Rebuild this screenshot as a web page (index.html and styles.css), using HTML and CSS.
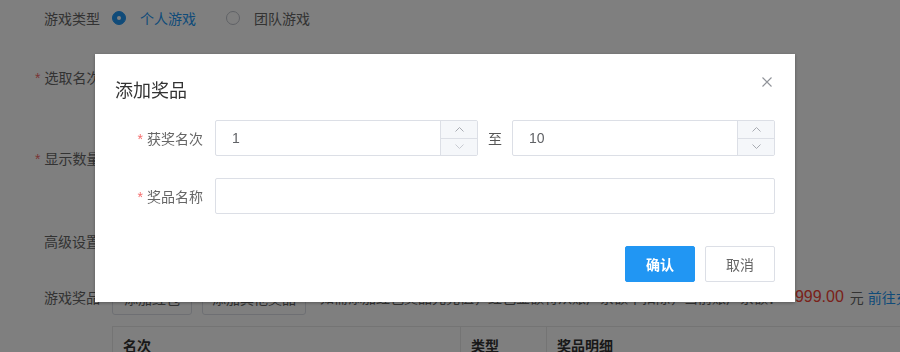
FILE: index.html
```html
<!DOCTYPE html>
<html lang="zh">
<head>
<meta charset="utf-8">
<title>添加奖品</title>
<link rel="stylesheet" href="styles.css">
</head>
<body>
<div class="form">
  <div class="row row-type">
    <div class="label">游戏类型</div>
    <div class="radio checked"><span class="dot"></span><span class="radio-text">个人游戏</span></div>
    <div class="radio"><span class="dot"></span><span class="radio-text">团队游戏</span></div>
  </div>
  <div class="row row-rank">
    <div class="label"><span class="req">*</span>选取名次</div>
    <div class="field-box"></div>
  </div>
  <div class="row row-count">
    <div class="label"><span class="req">*</span>显示数量</div>
    <div class="field-box"></div>
  </div>
  <div class="row row-adv">
    <div class="label">高级设置</div>
  </div>
  <div class="row row-prize">
    <div class="label">游戏奖品</div>
    <button class="btn-plain w80">添加红包</button>
    <button class="btn-plain w104">添加其他奖品</button>
    <span class="hint">如需添加红包奖品先充值，红包金额将从账户余额中扣除，当前账户余额：</span>
    <span class="amount">9999.00</span>
    <span class="unit">元</span>
    <a class="link">前往充值</a>
  </div>
  <div class="table">
    <div class="th c1">名次</div>
    <div class="th c2">类型</div>
    <div class="th c3">奖品明细</div>
  </div>
</div>

<div class="mask"></div>

<div class="dialog">
  <div class="dialog-header">
    <div class="dialog-title">添加奖品</div>
    <span class="close">
      <svg width="10" height="10" viewBox="0 0 10 10"><path d="M0.5 0.5 L9.5 9.5 M9.5 0.5 L0.5 9.5" stroke="#909399" stroke-width="1.1" fill="none"/></svg>
    </span>
  </div>
  <div class="dialog-body">
    <div class="d-row">
      <div class="d-label"><span class="req">*</span>获奖名次</div>
      <div class="num-input">
        <div class="num-value">1</div>
        <div class="spin">
          <div class="spin-btn"><svg width="9" height="5" viewBox="0 0 9 5"><path d="M0.5 4.5 L4.5 0.5 L8.5 4.5" stroke="#a8abb2" fill="none"/></svg></div>
          <div class="spin-btn down"><svg width="9" height="5" viewBox="0 0 9 5"><path d="M0.5 0.5 L4.5 4.5 L8.5 0.5" stroke="#c8cbd2" fill="none"/></svg></div>
        </div>
      </div>
      <span class="to">至</span>
      <div class="num-input">
        <div class="num-value">10</div>
        <div class="spin">
          <div class="spin-btn"><svg width="9" height="5" viewBox="0 0 9 5"><path d="M0.5 4.5 L4.5 0.5 L8.5 4.5" stroke="#a8abb2" fill="none"/></svg></div>
          <div class="spin-btn down"><svg width="9" height="5" viewBox="0 0 9 5"><path d="M0.5 0.5 L4.5 4.5 L8.5 0.5" stroke="#a8abb2" fill="none"/></svg></div>
        </div>
      </div>
    </div>
    <div class="d-row">
      <div class="d-label"><span class="req">*</span>奖品名称</div>
      <div class="text-input"></div>
    </div>
  </div>
  <div class="dialog-footer">
    <button class="btn-primary">确认</button>
    <button class="btn-default">取消</button>
  </div>
</div>
</body>
</html>
```

FILE: styles.css
```css
html, body {
  margin: 0;
  padding: 0;
  background: #ffffff;
  overflow: hidden;
  width: 900px;
  height: 352px;
}
body {
  font-family: "Liberation Sans", "Noto Sans CJK SC", sans-serif;
  font-size: 14px;
  color: #666666;
}
.form {
  padding-left: 35px;
}
.row {
  display: flex;
  align-items: center;
  height: 36px;
  white-space: nowrap;
}
.row > * {
  flex: none;
}
.row-type { margin-top: 0; }
.row-rank { margin-top: 23px; }
.row-count { margin-top: 45px; }
.row-adv { margin-top: 47px; }
.row-prize { margin-top: 20px; overflow: hidden; width: 865px; }
.label {
  width: 77px;
  padding-left: 9px;
  box-sizing: border-box;
  color: #666666;
}
.label .req {
  margin-left: -9px;
  margin-right: 4px;
}
.req {
  color: #f56c6c;
}
.radio {
  display: flex;
  align-items: center;
  margin-right: 30px;
}
.radio .dot {
  width: 12px;
  height: 12px;
  border-radius: 50%;
  border: 1px solid #c0c4cc;
  background: #ffffff;
  box-sizing: content-box;
  margin-right: 14px;
  position: relative;
}
.radio.checked .dot {
  border-color: #2196f3;
  background: #2196f3;
}
.radio.checked .dot::after {
  content: "";
  position: absolute;
  left: 4px;
  top: 4px;
  width: 4px;
  height: 4px;
  border-radius: 50%;
  background: #ffffff;
}
.radio.checked .radio-text {
  color: #2196f3;
}
.field-box {
  width: 300px;
  height: 34px;
  border: 1px solid #dcdfe6;
  border-radius: 2px;
}
.btn-plain {
  height: 33px;
  border: 1px solid #dcdfe6;
  border-radius: 3px;
  background: #ffffff;
  font: inherit;
  color: #666666;
  padding: 0;
  margin-right: 10px;
  margin-top: 2px;
}
.w80 { width: 80px; }
.w104 { width: 104px; margin-right: 14px; }
.hint {
  width: 466px;
  overflow: hidden;
  color: #666666;
}
.amount {
  font-size: 16px;
  color: #f44336;
}
.unit {
  margin-left: 6px;
  color: #666666;
}
.link {
  margin-left: 4px;
  color: #2196f3;
}
.table {
  margin-left: 77px;
  margin-top: 11px;
  width: 900px;
  height: 40px;
  border: 1px solid #e8e8e8;
  display: flex;
}
.th {
  font-weight: bold;
  color: #333333;
  line-height: 38px;
  padding-left: 10px;
  box-sizing: border-box;
  flex: none;
}
.c1 { width: 348px; border-right: 1px solid #e8e8e8; }
.c2 { width: 86px; border-right: 1px solid #e8e8e8; }
.c3 { width: 300px; }

.mask {
  position: fixed;
  left: 0;
  top: 0;
  right: 0;
  bottom: 0;
  background: rgba(0, 0, 0, 0.5);
}
.dialog {
  position: absolute;
  left: 95px;
  top: 54px;
  width: 700px;
  height: 248px;
  background: #ffffff;
  box-shadow: 0 1px 3px rgba(0, 0, 0, 0.3);
  box-sizing: border-box;
  padding: 0 20px 20px 20px;
}
.dialog-header {
  position: relative;
  padding-top: 25px;
}
.dialog-title {
  font-size: 18px;
  line-height: 24px;
  color: #333333;
}
.close {
  position: absolute;
  right: 3px;
  top: 23px;
  width: 10px;
  height: 10px;
  display: block;
}
.close svg { display: block; }
.dialog-body {
  margin-top: 17px;
  display: flex;
  flex-direction: column;
  gap: 22px;
}
.d-row {
  display: flex;
  align-items: center;
  height: 36px;
}
.d-label {
  width: 88px;
  margin-right: 12px;
  text-align: right;
  color: #666666;
  flex: none;
}
.d-label .req {
  margin-right: 4px;
}
.num-input {
  width: 263px;
  height: 36px;
  box-sizing: border-box;
  border: 1px solid #dcdfe6;
  border-radius: 2px;
  display: flex;
  overflow: hidden;
  flex: none;
}
.num-value {
  flex: 1;
  padding-left: 16px;
  line-height: 34px;
  color: #606266;
}
.spin {
  width: 36px;
  border-left: 1px solid #dcdfe6;
  background: #f5f7fa;
  display: flex;
  flex-direction: column;
}
.spin-btn {
  flex: 1;
  display: flex;
  align-items: center;
  justify-content: center;
}
.spin-btn svg { display: block; }
.spin-btn.down {
  border-top: 1px solid #dcdfe6;
}
.to {
  margin: 0 10px;
  color: #555555;
}
.text-input {
  flex: 1;
  height: 36px;
  box-sizing: border-box;
  border: 1px solid #dcdfe6;
  border-radius: 2px;
}
.dialog-footer {
  margin-top: 32px;
  display: flex;
  justify-content: flex-end;
  gap: 10px;
}
.btn-primary, .btn-default {
  width: 70px;
  height: 36px;
  font: inherit;
  border-radius: 2px;
  padding: 0;
}
.btn-primary {
  background: #2196f3;
  border: 1px solid #2196f3;
  color: #ffffff;
  font-weight: bold;
}
.btn-default {
  background: #ffffff;
  border: 1px solid #dcdfe6;
  color: #666666;
}
```
